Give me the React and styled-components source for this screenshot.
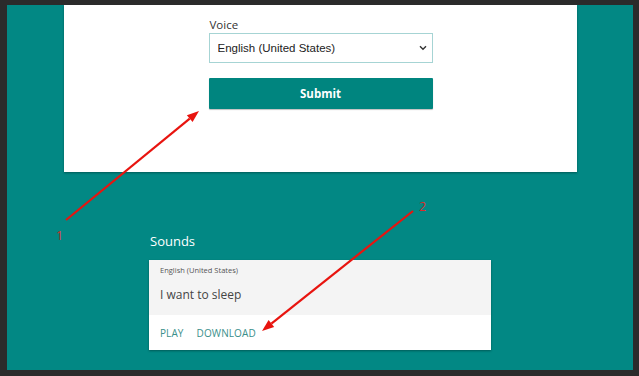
import React from "react";
import styled, { createGlobalStyle } from "styled-components";

const Global = createGlobalStyle`
  html, body { margin: 0; padding: 0; background: #2b2b2b; }
  body { font-family: "Open Sans", "Liberation Sans", sans-serif; overflow: hidden; }
  * { box-sizing: border-box; }
`;

const Frame = styled.div`
  position: relative;
  margin: 5px 6px 6px 7px;
  height: 365px;
  background: #028884;
  overflow: hidden;
`;

const Card = styled.div`
  margin: 0 56px 0 57px;
  height: 167px;
  background: #fff;
  box-shadow: 0 1px 2px rgba(0, 0, 0, 0.35);
  padding-top: 12px;
`;

const Form = styled.form`
  width: 224px;
  margin: 0 auto;
  display: flex;
  flex-direction: column;
`;

const Label = styled.label`
  font-size: 11.5px;
  line-height: 16px;
  color: #333;
  padding-left: 1px;
`;

const SelectWrap = styled.div`
  position: relative;
  height: 30px;
`;

const Select = styled.select`
  appearance: none;
  width: 100%;
  height: 30px;
  border: 1px solid #a6d4d4;
  border-radius: 0;
  background: #fff;
  font-family: "Liberation Sans", Arial, sans-serif;
  font-size: 11.5px;
  color: #222;
  padding: 0 0 0 8px;
  outline: none;
`;

const Chevron = styled.svg`
  position: absolute;
  right: 6px;
  top: 12px;
  pointer-events: none;
`;

const Submit = styled.button`
  margin-top: 15px;
  height: 31px;
  border: none;
  border-radius: 1px;
  background: #00857f;
  color: #fff;
  font-family: "Open Sans", sans-serif;
  font-weight: 700;
  font-size: 11.5px;
  box-shadow: 0 1px 1px rgba(0, 0, 0, 0.25);
`;

const Sounds = styled.section`
  width: 342px;
  margin: 60px auto 0;
`;

const Heading = styled.h2`
  margin: 0 0 10px 1px;
  font-size: 13px;
  line-height: 18px;
  font-weight: 400;
  color: #fff;
`;

const SoundCard = styled.div`
  background: #fff;
  box-shadow: 0 1px 2px rgba(0, 0, 0, 0.35);
`;

const SoundBody = styled.div`
  background: #f4f4f4;
  height: 55px;
  padding: 5px 10px 0 11px;
`;

const Lang = styled.div`
  font-size: 7.5px;
  line-height: 11px;
  color: #555;
`;

const Text = styled.div`
  margin-top: 11px;
  font-size: 12px;
  line-height: 16px;
  color: #444;
`;

const Actions = styled.div`
  height: 35px;
  display: flex;
  align-items: center;
  gap: 13px;
  padding: 0 10px 0 11px;
`;

const Action = styled.a`
  font-size: 10px;
  color: #3a8f8b;
  text-transform: uppercase;
  letter-spacing: 0.1px;
`;

const Annotations = styled.svg`
  position: absolute;
  left: -7px;
  top: -5px;
  pointer-events: none;
`;

const Marker = styled.span`
  position: absolute;
  left: ${(p) => p.$x - 7}px;
  top: ${(p) => p.$y - 5}px;
  font-family: "Open Sans", sans-serif;
  font-size: 12.5px;
  line-height: 14px;
  color: #dd2a2a;
`;

function Arrow({ x1, y1, x2, y2 }) {
  const dx = x2 - x1;
  const dy = y2 - y1;
  const len = Math.hypot(dx, dy);
  const ux = dx / len;
  const uy = dy / len;
  const hl = 12;
  const hw = 4.5;
  const bx = x2 - ux * hl;
  const by = y2 - uy * hl;
  const pts = `${x2},${y2} ${bx - uy * hw},${by + ux * hw} ${bx + uy * hw},${by - ux * hw}`;
  return (
    <g>
      <line x1={x1} y1={y1} x2={bx} y2={by} stroke="#e8140f" strokeWidth="2.2" />
      <polygon points={pts} fill="#e8140f" />
    </g>
  );
}

export default function App() {
  return (
    <>
      <Global />
      <Frame>
        <Card>
          <Form onSubmit={(e) => e.preventDefault()}>
            <Label>Voice</Label>
            <SelectWrap>
              <Select defaultValue="en-US">
                <option value="en-US">English (United States)</option>
              </Select>
              <Chevron width="8" height="6" viewBox="0 0 8 6">
                <path d="M1 1.2 L4 4.2 L7 1.2" fill="none" stroke="#333" strokeWidth="1.4" />
              </Chevron>
            </SelectWrap>
            <Submit type="submit">Submit</Submit>
          </Form>
        </Card>
        <Sounds>
          <Heading>Sounds</Heading>
          <SoundCard>
            <SoundBody>
              <Lang>English (United States)</Lang>
              <Text>I want to sleep</Text>
            </SoundBody>
            <Actions>
              <Action>Play</Action>
              <Action>Download</Action>
            </Actions>
          </SoundCard>
        </Sounds>
        <Annotations width="639" height="376" viewBox="0 0 639 376">
          <Arrow x1={66} y1={220} x2={199} y2={111} />
          <Arrow x1={413} y1={211} x2={262} y2={331} />
        </Annotations>
        <Marker $x={56} $y={229}>1</Marker>
        <Marker $x={419} $y={200}>2</Marker>
      </Frame>
    </>
  );
}
